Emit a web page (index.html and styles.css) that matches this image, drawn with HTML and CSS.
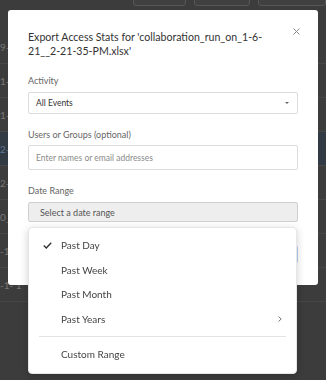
FILE: index.html
```html
<!DOCTYPE html>
<html lang="en">
<head>
    <meta charset="UTF-8">
    <meta name="viewport" content="width=device-width, initial-scale=1.0">
    <title>Export Access Stats</title>
    <link rel="stylesheet" href="styles.css">
</head>
<body>
    <div class="page">
        <div class="toolbar">
            <span class="tool-btn tb-1"></span>
            <span class="tool-btn tb-2"></span>
            <span class="tool-btn tb-3"></span>
        </div>
        <div class="rows">
            <div class="row"><span>9-1</span></div>
            <div class="row"><span>1-</span></div>
            <div class="row"><span>1-1</span></div>
            <div class="row selected"><span>2-</span></div>
            <div class="row"><span>2-</span></div>
            <div class="row"><span>0_</span></div>
            <div class="row"><span>-1</span></div>
            <div class="row"><span>-1- 1</span></div>
        </div>
    </div>

    <div class="overlay">
        <div class="modal">
            <span class="close">
                <svg width="7" height="7" viewBox="0 0 7 7"><path d="M0.5 0.5 L6.5 6.5 M6.5 0.5 L0.5 6.5" stroke="#8a8a8a" stroke-width="1" fill="none"/></svg>
            </span>
            <h3 class="modal-title">Export Access Stats for 'collaboration_run_on_1-6-21__2-21-35-PM.xlsx'</h3>

            <div class="form-group">
                <label>Activity</label>
                <div class="select">All Events <span class="caret"></span></div>
            </div>

            <div class="form-group">
                <label>Users or Groups (optional)</label>
                <div class="input">Enter names or email addresses</div>
            </div>

            <div class="form-group">
                <label>Date Range</label>
                <div class="date-picker">
                    <div class="date-select">Select a date range</div>
                    <ul class="menu">
                        <li class="menu-item active">
                            <svg class="check" width="9" height="7" viewBox="0 0 9 7"><path d="M0.8 3.6 L3.3 6 L8.2 0.8" stroke="#333" stroke-width="1.4" fill="none"/></svg>
                            Past Day
                        </li>
                        <li class="menu-item">Past Week</li>
                        <li class="menu-item">Past Month</li>
                        <li class="menu-item">Past Years
                            <svg class="chevron" width="4" height="6" viewBox="0 0 4 6"><path d="M0.6 0.6 L3.2 3 L0.6 5.4" stroke="#777" stroke-width="1" fill="none"/></svg>
                        </li>
                        <li class="divider"></li>
                        <li class="menu-item">Custom Range</li>
                    </ul>
                </div>
            </div>

            <div class="modal-footer">
                <span class="btn">Cancel</span>
                <span class="btn primary">Export</span>
            </div>
        </div>
    </div>
</body>
</html>
```

FILE: styles.css
```css
:root {
    --overlay-bg: #3c3c3c;
    --row-line: #474747;
    --white: #ffffff;
    --text: #333;
    --label: #666;
    --border: #dcdcdc;
}

body {
    margin: 0;
    font-family: 'Lato', sans-serif;
    background: var(--overlay-bg);
    color: var(--text);
    overflow: hidden;
}

/* page behind the dialog */
.page {
    height: 380px;
}

.toolbar {
    display: flex;
    align-items: flex-end;
    gap: 8px;
    height: 6px;
    padding-left: 133px;
    overflow: hidden;
}

.tool-btn {
    display: block;
    height: 20px;
    border: 1px solid #575757;
    border-radius: 3px;
    background: #404040;
    box-sizing: border-box;
}

.tb-1 { width: 54px; }
.tb-2 { width: 58px; }
.tb-3 { width: 70px; }

.rows {
    padding-top: 24px;
}

.row {
    height: 33px;
    border-bottom: 1px solid var(--row-line);
    display: flex;
    align-items: center;
    font-size: 10px;
    color: #777;
}

.row.selected {
    background: #323a44;
    color: #5d7896;
}

/* dialog */
.overlay {
    position: fixed;
    top: 0;
    left: 0;
    width: 100%;
    height: 100%;
    padding: 10px 8px;
    box-sizing: border-box;
}

.modal {
    position: relative;
    width: 310px;
    background: var(--white);
    border-radius: 3px;
    padding: 21px 20px 21px;
    box-sizing: border-box;
}

.close {
    position: absolute;
    top: 18px;
    right: 18px;
}

.close svg {
    display: block;
}

.modal-title {
    margin: 0 0 17px;
    padding-right: 20px;
    font-size: 10.6px;
    font-weight: 400;
    line-height: 13.5px;
    color: #333;
}

.form-group {
    margin-bottom: 15px;
}

.form-group label {
    display: block;
    font-size: 9px;
    line-height: 12px;
    color: var(--label);
    margin-bottom: 5px;
}

.select,
.input {
    display: flex;
    align-items: center;
    height: 22px;
    padding: 0 7px;
    border: 1px solid var(--border);
    border-radius: 2px;
    font-size: 8.5px;
    color: #333;
    box-sizing: border-box;
}

.caret {
    margin-left: auto;
    margin-right: 1px;
    border-left: 2px solid transparent;
    border-right: 2px solid transparent;
    border-top: 2.5px solid #666;
}

.input {
    height: 25px;
    color: #8a8a8a;
    margin-top: -1px;
}

.date-picker {
    position: relative;
}

.date-select {
    height: 20px;
    display: flex;
    align-items: center;
    padding: 0 11px;
    background: #eeeeee;
    border: 1px solid #cfcfcf;
    border-radius: 2px;
    font-size: 9px;
    color: #555;
    box-sizing: border-box;
}

.menu {
    position: absolute;
    top: calc(100% + 5px);
    left: 0;
    width: 269px;
    margin: 0;
    padding: 5px 0 6px;
    list-style: none;
    background: var(--white);
    border: 1px solid #e6e6e6;
    border-radius: 4px;
    box-shadow: 0 2px 8px rgba(0, 0, 0, 0.18);
    box-sizing: border-box;
    z-index: 2;
}

.menu-item {
    position: relative;
    height: 24.5px;
    display: flex;
    align-items: center;
    padding-left: 32px;
    font-size: 10px;
    color: #444;
}

.check {
    position: absolute;
    left: 14px;
    top: 9px;
}

.chevron {
    margin-left: auto;
    margin-right: 14px;
}

.divider {
    height: 1px;
    background: #e3e3e3;
    margin: 5px 10px 5px;
}

.modal-footer {
    display: flex;
    justify-content: flex-end;
    gap: 8px;
    margin-top: 23px;
}

.btn {
    display: flex;
    align-items: center;
    height: 17px;
    padding: 0 14px;
    border: 1px solid #d0d0d0;
    border-radius: 3px;
    font-size: 9px;
    color: #444;
}

.btn.primary {
    border-color: #b7cff0;
    color: #3b78c9;
}
```
